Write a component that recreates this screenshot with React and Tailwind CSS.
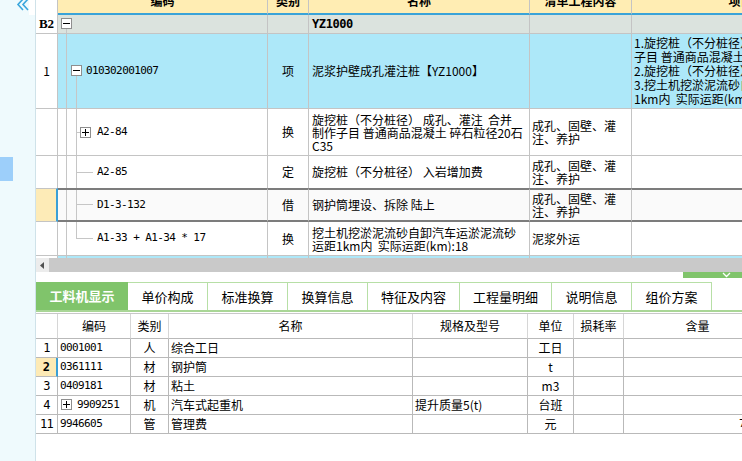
import React from "react";

const g = "border-[#c4c4c4]";
const mono = "font-['DejaVu_Sans_Mono',monospace] text-[11px] tracking-[-0.6px]";

// tree expander box (+ / -)
function Box({ minus, className = "" }) {
  return (
    <span className={`absolute w-[11px] h-[11px] border border-[#8e8e8e] bg-white flex items-center justify-center ${className}`}>
      <span className="absolute w-[7px] h-px bg-black" />
      {!minus && <span className="absolute h-[7px] w-px bg-black" />}
    </span>
  );
}

const VLine = ({ className = "" }) => <span className={`absolute w-px bg-[#c6c6c6] ${className}`} />;
const HLine = ({ className = "" }) => <span className={`absolute h-px bg-[#c6c6c6] ${className}`} />;

function HeadCell({ w, children }) {
  return (
    <div className={`${w} shrink-0 h-[15px] border-r border-b-2 ${g} border-b-[#3aa3d8] bg-[#ffedb3] flex justify-center overflow-hidden`}>
      <div className="-mt-[7px] leading-[16px] whitespace-nowrap">{children}</div>
    </div>
  );
}

function Lines({ lines, className = "" }) {
  return (
    <div className={`flex flex-col leading-[13px] overflow-hidden ${className}`}>
      {lines.map((l, i) => (
        <span key={i} className="whitespace-pre">{l}</span>
      ))}
    </div>
  );
}

function TopTable() {
  const cellB = `shrink-0 border-r border-b ${g}`;
  const cell = `shrink-0 border-r ${g}`;
  const sel = `shrink-0 border-r ${g} border-y-2 border-y-[#7c7c7c] bg-[#fafafa]`;
  return (
    <div className="flex flex-col shrink-0">
      {/* header */}
      <div className="flex font-bold">
        <div className={`w-[22px] shrink-0 h-[15px] border-r ${g} bg-white`} />
        <HeadCell w="w-[210px]">编码</HeadCell>
        <HeadCell w="w-[41px]">类别</HeadCell>
        <HeadCell w="w-[221px]">名称</HeadCell>
        <HeadCell w="w-[102px]">清单工程内容</HeadCell>
        <HeadCell w="w-[242px]">项目特征</HeadCell>
      </div>

      {/* B2 */}
      <div className="flex h-[19px]">
        <div className={`w-[22px] ${cellB} flex items-center justify-center font-bold font-['Liberation_Serif',serif] text-[13px]`}>B2</div>
        <div className={`w-[210px] ${cellB} bg-[#dbe3de] relative`}>
          <Box minus className="left-[3px] top-[3px]" />
          <VLine className="left-[8px] top-[14px] bottom-0" />
        </div>
        <div className={`w-[41px] ${cellB} bg-[#dbe3de]`} />
        <div className={`w-[221px] ${cellB} bg-[#dbe3de] flex items-center pl-[3px] font-bold font-['DejaVu_Sans_Mono',monospace] text-[12px] tracking-[-0.4px]`}>YZ1000</div>
        <div className={`w-[102px] ${cellB} bg-[#dbe3de]`} />
        <div className={`w-[242px] ${cellB} bg-[#dbe3de]`} />
      </div>

      {/* 1 */}
      <div className="flex h-[75px]">
        <div className={`w-[22px] ${cellB} flex items-center justify-center`}>1</div>
        <div className={`w-[210px] ${cellB} bg-[#ade8f9] relative flex items-center pl-[28px] ${mono}`}>
          <VLine className="left-[8px] top-0 bottom-0" />
          <Box minus className="left-[13px] top-[31px]" />
          <VLine className="left-[18px] top-[42px] bottom-0" />
          010302001007
        </div>
        <div className={`w-[41px] ${cellB} bg-[#ade8f9] flex items-center justify-center`}>项</div>
        <div className={`w-[221px] ${cellB} bg-[#ade8f9] flex items-center pl-[3px] whitespace-nowrap overflow-hidden`}>泥浆护壁成孔灌注桩【YZ1000】</div>
        <div className={`w-[102px] ${cellB} bg-[#ade8f9]`} />
        <div className={`w-[242px] ${cellB} bg-[#ade8f9] flex items-center pl-[2px]`}>
          <Lines
            className="leading-[14px]"
            lines={[
              "1.旋挖桩（不分桩径） 成孔、灌注 合并制作",
              "子目 普通商品混凝土 碎石粒径20石 C35",
              "2.旋挖桩（不分桩径） 入岩增加费",
              "3.挖土机挖淤泥流砂自卸汽车运淤泥流砂",
              "1km内  实际运距(km):18",
            ]}
          />
        </div>
      </div>

      {/* A2-84 */}
      <div className="flex h-[47px]">
        <div className={`w-[22px] ${cellB}`} />
        <div className={`w-[210px] ${cellB} relative flex items-center pl-[39px] ${mono}`}>
          <VLine className="left-[8px] top-0 bottom-0" />
          <VLine className="left-[18px] top-0 bottom-0" />
          <HLine className="left-[18px] top-[23px] w-[4px]" />
          <Box className="left-[22px] top-[18px]" />
          A2-84
        </div>
        <div className={`w-[41px] ${cellB} flex items-center justify-center`}>换</div>
        <div className={`w-[221px] ${cellB} flex items-center pl-[3px]`}>
          <Lines lines={["旋挖桩（不分桩径） 成孔、灌注  合并", "制作子目 普通商品混凝土 碎石粒径20石", "C35"]} />
        </div>
        <div className={`w-[102px] ${cellB} flex items-center pl-[2px]`}>
          <Lines lines={["成孔、固壁、灌", "注、养护"]} />
        </div>
        <div className={`w-[242px] ${cellB}`} />
      </div>

      {/* A2-85 */}
      <div className="flex h-[32px]">
        <div className={`w-[22px] ${cell}`} />
        <div className={`w-[210px] ${cell} relative flex items-center pl-[39px] ${mono}`}>
          <VLine className="left-[8px] top-0 bottom-0" />
          <VLine className="left-[18px] top-0 bottom-0" />
          <HLine className="left-[18px] top-[16px] w-[17px]" />
          A2-85
        </div>
        <div className={`w-[41px] ${cell} flex items-center justify-center`}>定</div>
        <div className={`w-[221px] ${cell} flex items-center pl-[3px] whitespace-pre`}>旋挖桩（不分桩径） 入岩增加费</div>
        <div className={`w-[102px] ${cell} flex items-center pl-[2px]`}>
          <Lines lines={["成孔、固壁、灌", "注、养护"]} />
        </div>
        <div className={`w-[242px] ${cell}`} />
      </div>

      {/* D1-3-132 selected */}
      <div className="flex h-[34px]">
        <div className={`w-[22px] shrink-0 border-y border-r-2 ${g} border-r-[#3a9fd6] bg-[#fdebb7]`} />
        <div className={`w-[210px] ${sel} relative flex items-center pl-[39px] ${mono}`}>
          <VLine className="left-[8px] top-0 bottom-0" />
          <VLine className="left-[18px] top-0 bottom-0" />
          <HLine className="left-[18px] top-[14px] w-[17px]" />
          D1-3-132
        </div>
        <div className={`w-[41px] ${sel} flex items-center justify-center`}>借</div>
        <div className={`w-[221px] ${sel} flex items-center pl-[3px] whitespace-pre`}>钢护筒埋设、拆除 陆上</div>
        <div className={`w-[102px] ${sel} flex items-center pl-[2px]`}>
          <Lines lines={["成孔、固壁、灌", "注、养护"]} />
        </div>
        <div className={`w-[242px] ${sel}`} />
      </div>

      {/* A1-33 */}
      <div className="flex h-[34px]">
        <div className={`w-[22px] ${cellB}`} />
        <div className={`w-[210px] ${cellB} relative flex items-center pl-[39px] ${mono} whitespace-pre`}>
          <VLine className="left-[8px] top-0 bottom-0" />
          <VLine className="left-[18px] top-0 h-[16px]" />
          <HLine className="left-[18px] top-[16px] w-[17px]" />
          A1-33 + A1-34 * 17
        </div>
        <div className={`w-[41px] ${cellB} flex items-center justify-center`}>换</div>
        <div className={`w-[221px] ${cellB} flex items-center pl-[3px]`}>
          <Lines lines={["挖土机挖淤泥流砂自卸汽车运淤泥流砂", "运距1km内  实际运距(km):18"]} />
        </div>
        <div className={`w-[102px] ${cellB} flex items-center pl-[2px]`}>泥浆外运</div>
        <div className={`w-[242px] ${cellB}`} />
      </div>

      {/* next row peeking */}
      <div className="flex h-[2px]">
        <div className={`w-[22px] ${cell}`} />
        <div className={`w-[210px] ${cell} bg-[#ade8f9] relative`}>
          <VLine className="left-[8px] top-0 bottom-0" />
        </div>
        <div className={`w-[41px] ${cell} bg-[#ade8f9]`} />
        <div className={`w-[221px] ${cell} bg-[#ade8f9]`} />
        <div className={`w-[102px] ${cell} bg-[#ade8f9]`} />
        <div className={`w-[242px] ${cell} bg-[#ade8f9]`} />
      </div>
    </div>
  );
}

function Scrollbar() {
  return (
    <div className="flex h-[14px] shrink-0 bg-[#c9c9c9]">
      <div className="w-[13px] h-full bg-[#ececec] flex items-center justify-center">
        <svg width="5" height="7" viewBox="0 0 5 7">
          <path d="M4 0 L0 3.5 L4 7 Z" fill="#505050" />
        </svg>
      </div>
    </div>
  );
}

const tabs = [
  ["工料机显示", "w-[92px]"],
  ["单价构成", "w-[80px]"],
  ["标准换算", "w-[80px]"],
  ["换算信息", "w-[80px]"],
  ["特征及内容", "w-[92px]"],
  ["工程量明细", "w-[92px]"],
  ["说明信息", "w-[80px]"],
  ["组价方案", "w-[80px]"],
];

function Tabs() {
  return (
    <div className="flex h-[30px] shrink-0 border-b-2 border-[#a9d696] text-[13px]">
      {tabs.map(([t, w], i) =>
        i === 0 ? (
          <div key={t} className={`${w} shrink-0 bg-[#80c46b] text-white font-bold flex items-center justify-center`}>{t}</div>
        ) : (
          <div key={t} className={`${w} shrink-0 border-t border-r border-[#b7dfa6] flex items-center justify-center`}>{t}</div>
        )
      )}
    </div>
  );
}

const bCols = ["w-[22px]", "w-[73px]", "w-[38px]", "w-[244px]", "w-[115px]", "w-[46px]", "w-[50px]", "w-[148px]"];
const bHead = ["", "编码", "类别", "名称", "规格及型号", "单位", "损耗率", "含量"];

const bRows = [
  { n: "1", code: "0001001", t: "人", name: "综合工日", spec: "", unit: "工日" },
  { n: "2", code: "0361111", t: "材", name: "钢护筒", spec: "", unit: "t", sel: true },
  { n: "3", code: "0409181", t: "材", name: "粘土", spec: "", unit: "m3" },
  { n: "4", code: "9909251", t: "机", name: "汽车式起重机", spec: "提升质量5(t)", unit: "台班", plus: true },
  { n: "11", code: "9946605", t: "管", name: "管理费", spec: "", unit: "元", qty: "7" },
];

function BottomTable() {
  const c = "shrink-0 border-r border-b border-[#b9b9b9] h-full";
  return (
    <div className="flex flex-col mt-[1px] shrink-0">
      <div className="flex h-[26px] border-t border-[#c8c8c8]">
        {bHead.map((h, i) => (
          <div key={i} className={`${bCols[i]} shrink-0 h-full border-r border-b border-r-[#d6d6d6] border-b-[#b9b9b9] flex items-center justify-center`}>{h}</div>
        ))}
      </div>
      {bRows.map((r) => (
        <div key={r.n} className="flex h-[19px]">
          <div
            className={`${bCols[0]} ${c} flex items-center justify-center ${mono} text-[12px] ${
              r.sel ? "bg-[#fdeab5] font-bold border-r-2 border-r-[#3a9fd6]" : ""
            }`}
          >
            {r.n}
          </div>
          <div className={`${bCols[1]} ${c} relative flex items-center ${r.plus ? "pl-[19px]" : "pl-[2px]"} ${mono}`}>
            {r.plus && <Box className="left-[3px] top-[3px]" />}
            {r.code}
          </div>
          <div className={`${bCols[2]} ${c} flex items-center justify-center`}>{r.t}</div>
          <div className={`${bCols[3]} ${c} flex items-center pl-[2px]`}>{r.name}</div>
          <div className={`${bCols[4]} ${c} flex items-center pl-[2px] whitespace-nowrap`}>{r.spec}</div>
          <div className={`${bCols[5]} ${c} flex items-center justify-center`}>{r.unit}</div>
          <div className={`${bCols[6]} ${c}`} />
          <div className={`${bCols[7]} ${c} flex items-center pl-[115px] ${mono}`}>{r.qty}</div>
        </div>
      ))}
    </div>
  );
}

export default function App() {
  return (
    <div className="w-[742px] h-[461px] flex overflow-hidden bg-white text-black text-[12px] font-['Noto_Sans_CJK_SC',sans-serif]">
      {/* collapsed side panel */}
      <aside className="relative w-[36px] shrink-0 bg-[#effafd] border-r border-[#cfe2e9] flex flex-col">
        <div className="absolute right-0 top-0 w-[6px] h-[15px] bg-white" />
        <svg className="absolute left-[16px] top-0" width="14" height="11" viewBox="0 0 14 11">
          <path d="M7 -1 L2 4.5 L7 10" fill="none" stroke="#3aa6dc" strokeWidth="1.6" />
          <path d="M12 -1 L7 4.5 L12 10" fill="none" stroke="#3aa6dc" strokeWidth="1.6" />
        </svg>
        <div className="mt-[157px] w-[13px] h-[24px] bg-[#9dcffa]" />
      </aside>

      <main className="flex-1 min-w-0 flex flex-col overflow-hidden">
        <TopTable />
        <Scrollbar />
        <div className="flex h-[10px] shrink-0">
          <div className="ml-[647px] w-[86px] h-[6px] shrink-0 bg-[#80c46b] flex justify-center">
            <svg width="9" height="6" viewBox="0 0 9 6">
              <path d="M1 1 L4.5 4.5 L8 1" fill="none" stroke="#ffffff" strokeWidth="1.3" />
            </svg>
          </div>
        </div>
        <Tabs />
        <BottomTable />
      </main>
    </div>
  );
}
